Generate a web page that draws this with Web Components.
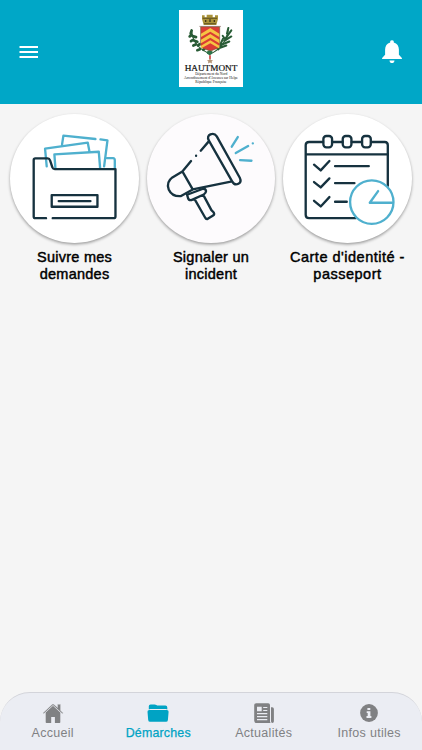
<!DOCTYPE html>
<html lang="fr">
<head>
<meta charset="utf-8">
<title>Hautmont</title>
<style>
    body {
        margin: 0;
        background: #f5f5f5;
        font-family: "Liberation Sans", Arial, sans-serif;
    }
</style>
</head>
<body>

<template id="townCrestTemplate">
    <style>
        :host { display: block; width: 64px; height: 77px; background: #fff; }
        svg { display: block; width: 100%; height: 100%; }
        text { font-family: "Liberation Serif", serif; fill: #111; text-anchor: middle; }
    </style>
    <svg viewBox="27 30 192 230" preserveAspectRatio="none">
        <!-- branches -->
        <g fill="none" stroke="#285b35" stroke-linecap="round">
            <path d="M65 90Q68 137 113 158M176 82Q170 135 128 158" stroke-width="3"/>
            <path d="M65 91l-3 9M64 104l-5 5M68 108l10 3M69 119l-6 4M73 122l9 3M77 133l-7 3M84 136l5-4M90 147l-8 3M100 149l4-4" stroke-width="8"/>
            <path d="M175 84l-4 16M184 91l-16 22M158 107l7 10M184 109l-21 13M178 124l-22 9M151 133l8-17M169 136l-25 9M145 148l7-10" stroke-width="6"/>
        </g>
        <!-- crown -->
        <path d="M96 46h8v6h6v-8h18v8h7v-6h9v11l-5 18H101l-5-18z" fill="#a99239"/>
        <path d="M98 55h43M102 71h36" stroke="#5a4d20" stroke-width="3"/>
        <path d="M107 60v6M120 58v8M133 60v6" stroke="#3f3517" stroke-width="4"/>
        <!-- shield -->
        <path d="M92 80h57v52q0 13-14 15l-14 6-14-6q-15-2-15-15z" fill="#da3b35" stroke="#763" stroke-width="2"/>
        <path d="M93 101l28-17 27 17v10l-27-16-28 16zM93 119l28-17 27 17v10l-27-16-28 16zM93 137l28-17 27 17v8l-27-16-28 16z" fill="#f6c443"/>
        <path d="M88 79h65" stroke="#8b6b65" stroke-width="2"/>
        <!-- knot and medal -->
        <path d="M119 151q-12 2-8 9l8 6 8-6q5-7-8-9z" fill="#307249"/>
        <path d="M120 165v11" stroke="#c44" stroke-width="5"/>
        <path d="M120 174l3 5 6 1-4 4 1 6-6-3-6 3 1-6-4-4 6-1z" fill="#b49476"/>
        <text x="123" y="213" font-size="21.5" textLength="158" lengthAdjust="spacingAndGlyphs" stroke="#111" stroke-width=".5">HAUTMONT</text>
        <text x="124" y="225" font-size="10" textLength="96" lengthAdjust="spacingAndGlyphs">Département du Nord</text>
        <text x="123" y="236" font-size="10" textLength="162" lengthAdjust="spacingAndGlyphs">Arrondissement d'Avesnes sur Helpe</text>
        <text x="123" y="247" font-size="10" textLength="94" lengthAdjust="spacingAndGlyphs">République Française</text>
    </svg>
</template>

<template id="appHeaderTemplate">
    <style>
        :host {
            display: flex;
            box-sizing: border-box;
            height: 104px;
            padding: 0 19px 7px 19px;
            align-items: center;
            justify-content: space-between;
            background: #00a7c7;
        }
        svg { display: block; flex: none; fill: #fff; margin-top: 7px; }
    </style>
    <svg width="22" height="16" viewBox="0 0 22 16"><path d="M.5 2.1h18.5v2H.5zM.5 7.1h18.5v2H.5zM.5 12.1h18.5v2H.5z"/></svg>
    <slot></slot>
    <svg width="22" height="26" viewBox="0 0 22 26"><path d="M11 1.3c2 0 1.800 1.200 1.800 2.300 3.300.9 5.100 3.700 5.100 7v5.200l3 3.100v1.200H1.100v-1.200l3-3.100v-5.200c0-3.300 1.800-6.100 5.100-7 0-1.100-.2-2.300 1.800-2.300zM8.500 21.500h5c0 3.400-5 3.400-5 0z"/></svg>
</template>

<template id="serviceTileTemplate">
    <style>
        :host { display: block; width: 128.5px; }
        .disc {
            width: 128.5px;
            height: 128.5px;
            border-radius: 50%;
            background: var(--disc, #fff);
            box-shadow: 0 1.5px 3px rgba(0, 0, 0, .36);
        }
        .label {
            margin: 6px -8px 0;
            font-size: 14.5px;
            line-height: 17.2px;
            text-align: center;
            color: #000;
            -webkit-text-stroke: .45px #000;
            letter-spacing: var(--track, .25px);
        }
        ::slotted(svg) {
            display: block;
            width: 100%;
            height: 100%;
            fill: none;
            stroke: #16323f;
            stroke-width: 7;
            stroke-linecap: round;
            stroke-linejoin: round;
        }
    </style>
    <div class="disc"><slot name="icon"></slot></div>
    <div class="label"><slot></slot></div>
</template>

<template id="serviceGridTemplate">
    <style>
        :host {
            display: flex;
            padding: 10px 10.3px 0;
            justify-content: space-between;
        }
    </style>
    <slot></slot>
</template>

<template id="tabBarTemplate">
    <style>
        :host {
            display: flex;
            box-sizing: border-box;
            height: 58px;
            border-top: 1px solid #d3d4da;
            border-radius: 30px 30px 0 0;
            background: #ebedf3;
        }
    </style>
    <slot></slot>
</template>

<template id="tabItemTemplate">
    <style>
        :host {
            display: flex;
            flex: 1;
            flex-direction: column;
            align-items: center;
            padding-top: 9px;
            color: #808183;
        }
        :host([active]) { color: #00a3c4; }
        ::slotted(svg) { display: block; width: 22px; height: 22px; fill: currentColor; }
        .label {
            margin-top: 2px;
            font-size: 12.5px;
            line-height: 15px;
            letter-spacing: .3px;
            white-space: nowrap;
        }
        :host([active]) .label { font-size: 12.4px; letter-spacing: .2px; -webkit-text-stroke: .25px currentColor; }
    </style>
    <slot name="icon"></slot>
    <div class="label"><slot></slot></div>
</template>

<template id="appShellTemplate">
    <style>
        :host { display: flex; flex-direction: column; height: 100vh; overflow: hidden; }
        main { flex: 1; }
    </style>
    <slot name="header"></slot>
    <main><slot></slot></main>
    <slot name="tabs"></slot>
</template>

<script>
    class TemplateElement extends HTMLElement {
        constructor() {
            super();
            const template = document.getElementById(this.constructor.template).content;
            this.attachShadow({ mode: 'open' }).appendChild(template.cloneNode(true));
        }
    }

    class AppShell extends TemplateElement { static template = 'appShellTemplate'; }
    class AppHeader extends TemplateElement { static template = 'appHeaderTemplate'; }
    class TownCrest extends TemplateElement { static template = 'townCrestTemplate'; }
    class ServiceGrid extends TemplateElement { static template = 'serviceGridTemplate'; }
    class ServiceTile extends TemplateElement { static template = 'serviceTileTemplate'; }
    class TabBar extends TemplateElement { static template = 'tabBarTemplate'; }
    class TabItem extends TemplateElement { static template = 'tabItemTemplate'; }

    customElements.define('app-shell', AppShell);
    customElements.define('app-header', AppHeader);
    customElements.define('town-crest', TownCrest);
    customElements.define('service-grid', ServiceGrid);
    customElements.define('service-tile', ServiceTile);
    customElements.define('tab-bar', TabBar);
    customElements.define('tab-item', TabItem);
</script>

<app-shell>
    <app-header slot="header"><town-crest></town-crest></app-header>

    <service-grid>
        <service-tile>
            <svg slot="icon" viewBox="31 30 385 385">
                <g stroke="#4fb0ce">
                    <path d="M187 121L191 95L287 105M302 106L323 109L313 187M141 187L136 134L264 116L269 142M167 192L164 151L297 143L301 192M322 162H340Q345 162 345 169V191"/>
                </g>
                <path d="M139 342H107Q102 342 102 337V168Q102 163 107 163H144Q149 163 151 169L158 190Q160 195 165 195H347V337Q347 342 341 342H159"/>
                <path d="M156 273H293V308H156zM177 291H272"/>
            </svg>
            Suivre mes<br>demandes
        </service-tile>
        <service-tile style="--disc: #fdfbfd">
            <svg slot="icon" viewBox="20 30 385 385">
                <path d="M205 109Q199 96 210 91Q222 86 229 97L298 221Q304 234 294 239Q282 245 275 232zM205 112L181 140M152 171L126 202M167 155h.1M126 202L96 220Q77 234 85 256Q95 278 122 276L157 256zM157 256L275 232"/>
                <path d="M140 272L188 254Q196 254 197 261Q197 267 190 271L153 288Q145 289 143 282zM163 286L194 340Q197 346 202 344L218 334Q223 331 220 325L213 318L189 273"/>
                <path stroke="#4fb0ce" d="M292 99L274 128M286 147L323 126M337 118h.1M299 168L333 170"/>
            </svg>
            Signaler un<br>incident
        </service-tile>
        <service-tile style="--track: .5px">
            <svg slot="icon" viewBox="15 30 385 385">
                <path d="M135 114H93Q83 114 83 124V332Q83 342 93 342H232M163 114H193M221 114H251M279 114H320Q329 114 329 124V245M84 151H328"/>
                <rect x="136" y="96" width="26" height="34" rx="9"/>
                <rect x="194" y="96" width="26" height="34" rx="9"/>
                <rect x="252" y="96" width="26" height="34" rx="9"/>
                <path d="M108 182L128 199L154 171M108 234L128 250L154 223M108 290L128 307L154 279M171 186H272M171 237H229M171 293H206"/>
                <g stroke="#4fb0ce">
                    <circle cx="281" cy="294" r="65" fill="#fff"/>
                    <path d="M300 261L275 296H342"/>
                </g>
            </svg>
            Carte d'identité -<br>passeport
        </service-tile>
    </service-grid>

    <tab-bar slot="tabs">
        <tab-item>
            <svg slot="icon" viewBox="0 0 22 22"><path d="M11 3.8L18.3 10.4V20.3Q18.3 21 17.6 21H12.9V15.1H9.2V21H4.5Q3.7 21 3.7 20.3V10.4z"/><path d="M.9 10.9L10.3 2.2Q11 1.6 11.7 2.2L15.5 5.6V2.3H18.6V8.5L21.2 10.9L20.4 11.8L11 3.3L1.7 11.8z" stroke="#ebedf3" stroke-width=".4"/></svg>
            Accueil
        </tab-item>
        <tab-item active>
            <svg slot="icon" viewBox="0 0 22 22"><path d="M1.8 7.4V4.2Q1.8 2.4 3.6 2.4H7.6Q8.6 2.4 9.4 3.1L10.1 3.6H18.4Q20.3 3.6 20.3 5.4V7.4Q19.8 7 18.8 7H3.3Q2.3 7 1.8 7.4zM2.3 8H19.8Q21.7 8 21.6 9.7L20.9 17.9Q20.7 19.8 19 19.8H3.1Q1.4 19.8 1.2 17.9L.5 9.7Q.4 8 2.3 8z"/></svg>
            Démarches
        </tab-item>
        <tab-item>
            <svg slot="icon" viewBox="0 0 22 22"><path d="M3.2 1.3H15.2Q17 1.3 17 3.1V19.2Q17 20.4 17.7 21H3.8Q1.2 21 1.2 18.4V3.1Q1.2 1.3 3.2 1.3zM18 5.2H19.2Q20.9 5.2 20.9 7V19.2Q20.9 21 19.4 21Q18 21 18 19.2z"/><path fill="#ebedf3" d="M4 4.8H8.7V9.2H4zM10.2 5H14.3V6H10.2zM10.2 8.1H14.3V9.1H10.2zM4 11.1H14.3V12.2H4zM4 14.1H14.3V15.2H4zM4 17.1H14.3V18.2H4z"/></svg>
            Actualités
        </tab-item>
        <tab-item>
            <svg slot="icon" viewBox="0 0 22 22"><circle cx="11" cy="11" r="8.9"/><path fill="#ebedf3" d="M9.4 5.9H12.3V8.1H9.4zM8.7 9.3H12.4V14.1H13.4V15.9H8.5V14.1H9.7V11H8.7z"/></svg>
            Infos utiles
        </tab-item>
    </tab-bar>
</app-shell>

</body>
</html>
